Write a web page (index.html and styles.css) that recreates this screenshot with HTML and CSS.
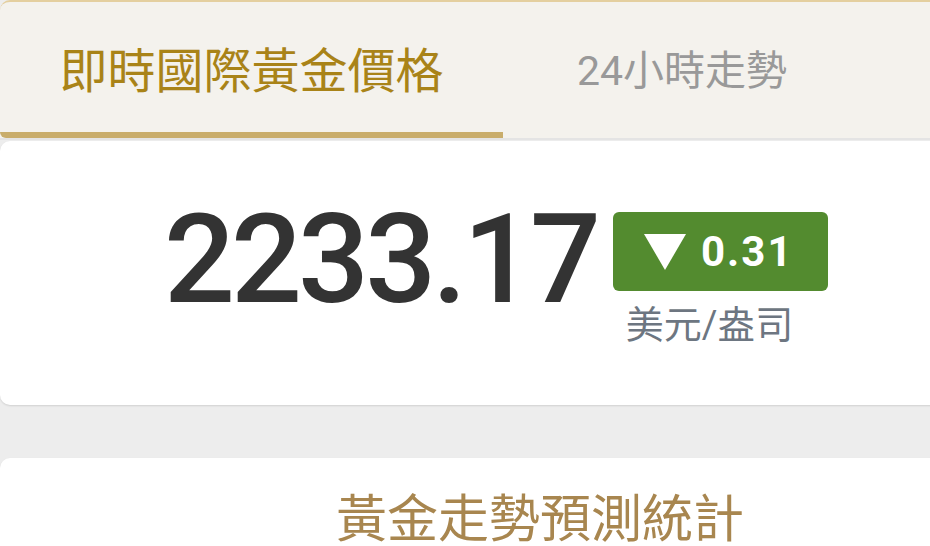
FILE: index.html
```html
<!DOCTYPE html>
<html lang="zh-Hant">
<head>
  <meta charset="UTF-8">
  <title>即時國際黃金價格</title>
  <link rel="stylesheet" href="styles.css">
</head>
<body>
  <div class="page">
    <!-- Tabs -->
    <div class="tabs">
      <div class="tab active">即時國際黃金價格</div>
      <div class="tab">24小時走勢</div>
    </div>

    <!-- Price card -->
    <div class="card price-card">
      <div class="quote">
        <div class="price">2233.17</div>
        <div class="change-box">
          <div class="badge down">
            <span class="arrow"></span>
            <span class="diff">0.31</span>
          </div>
          <div class="unit">美元/盎司</div>
        </div>
      </div>
    </div>

    <!-- Forecast card -->
    <div class="card forecast-card">
      <h2>黃金走勢預測統計</h2>
    </div>
  </div>
</body>
</html>
```

FILE: styles.css
```css
html, body {
  margin: 0;
  overflow: hidden;
}
body {
  background-color: #ededed;
  font-family: "Roboto", "Noto Sans CJK TC", sans-serif;
}
.page {
  width: 1080px;
}
.tabs {
  display: flex;
  height: 136px;
  background-color: #f4f2ed;
  border-top: 2px solid #e4cf9f;
  border-radius: 10px 10px 0 0;
  box-shadow: 0 2px 0 #e4e4e4;
}
.tab {
  display: flex;
  align-items: center;
  box-sizing: border-box;
  padding-bottom: 6px;
  font-size: 41px;
  color: #999;
}
.tab.active {
  width: 503px;
  justify-content: center;
  font-size: 48px;
  color: #a98318;
  border-bottom: 6px solid #c9ad6b;
  border-radius: 0 0 0 6px;
  padding-bottom: 0;
}
.tab + .tab {
  padding-left: 74px;
}
.card {
  background-color: #fff;
  border-radius: 10px;
  box-shadow: 0 1px 2px rgba(0,0,0,0.12);
}
.price-card {
  margin-top: 3px;
  height: 264px;
}
.quote {
  display: flex;
  align-items: flex-start;
  padding-left: 164px;
}
.price {
  margin-top: 56px;
  font-size: 125px;
  font-weight: 500;
  line-height: 1;
  letter-spacing: -4px;
  color: #333;
}
.change-box {
  margin-top: 71px;
  margin-left: 16px;
  display: flex;
  flex-direction: column;
  align-items: center;
}
.badge {
  display: flex;
  align-items: center;
  box-sizing: border-box;
  width: 215px;
  height: 79px;
  padding-left: 31px;
  border-radius: 6px;
}
.badge.down {
  background-color: #538b2f;
}
.arrow {
  width: 0;
  height: 0;
  border-left: 21px solid transparent;
  border-right: 21px solid transparent;
  border-top: 36px solid #fff;
}
.diff {
  margin-left: 15px;
  font-size: 42px;
  font-weight: bold;
  letter-spacing: 2px;
  color: #fff;
}
.unit {
  margin-top: 12px;
  margin-right: 22px;
  font-size: 38px;
  line-height: 1.2;
  color: #6d7681;
}
.forecast-card {
  margin-top: 53px;
  height: 200px;
}
.forecast-card h2 {
  margin: 0;
  padding-top: 31px;
  text-align: center;
  font-size: 51px;
  font-weight: normal;
  line-height: 1.2;
  color: #a8864f;
}
```
